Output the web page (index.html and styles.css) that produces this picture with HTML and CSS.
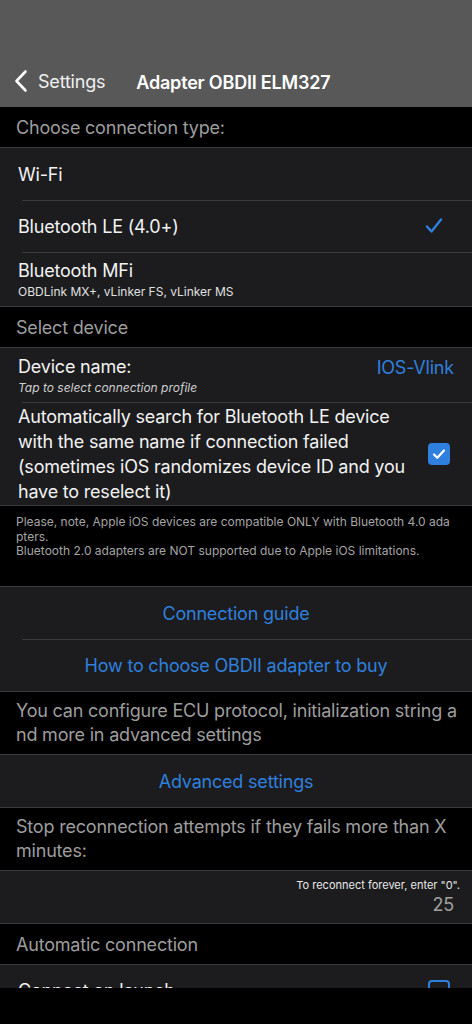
FILE: index.html
```html
<!DOCTYPE html>
<html>
    <head>
        <meta charset="UTF-8">
        <meta name="viewport" content="width=device-width, initial-scale=1.0">
        <link rel="stylesheet" href="styles.css">
        <title>Adapter OBDII ELM327</title>
    </head>
    <body>

        <div class="navbar">
            <div class="back">
                <svg class="chevron" width="14" height="24" viewBox="0 0 14 24">
                    <path d="M11.5 2.5 L2.5 12 L11.5 21.5" fill="none" stroke="#fff" stroke-width="2.6" stroke-linecap="round" stroke-linejoin="round"/>
                </svg>
                <span>Settings</span>
            </div>
            <div class="title">Adapter OBDII ELM327</div>
        </div>

        <div class="header">Choose connection type:</div>
        <div class="group">
            <div class="row"><span class="label">Wi-Fi</span></div>
            <div class="row">
                <span class="label">Bluetooth LE (4.0+)</span>
                <svg class="check" width="18" height="16" viewBox="0 0 18 16">
                    <path d="M2 8.5 L6.5 13.5 L16 1.5" fill="none" stroke="#2f80de" stroke-width="2.4" stroke-linecap="round" stroke-linejoin="round"/>
                </svg>
            </div>
            <div class="row two">
                <div class="texts">
                    <span class="label">Bluetooth MFi</span>
                    <span class="sub">OBDLink MX+, vLinker FS, vLinker MS</span>
                </div>
            </div>
        </div>

        <div class="header">Select device</div>
        <div class="group">
            <div class="row two">
                <div class="texts">
                    <span class="label">Device name:</span>
                    <span class="sub italic">Tap to select connection profile</span>
                </div>
                <span class="value">IOS-Vlink</span>
            </div>
            <div class="row tall">
                <span class="label long">Automatically search for Bluetooth LE device with the same name if connection failed (sometimes iOS randomizes device ID and you have to reselect it)</span>
                <div class="box on">
                    <svg width="14" height="12" viewBox="0 0 14 12">
                        <path d="M2 6.5 L5.3 9.8 L12 2.5" fill="none" stroke="#fff" stroke-width="2.2" stroke-linecap="round" stroke-linejoin="round"/>
                    </svg>
                </div>
            </div>
        </div>

        <div class="note">Please, note, Apple iOS devices are compatible ONLY with Bluetooth 4.0 ada<br>pters.<br>Bluetooth 2.0 adapters are NOT supported due to Apple iOS limitations.</div>

        <div class="group">
            <div class="row link">Connection guide</div>
            <div class="row link">How to choose OBDII adapter to buy</div>
        </div>

        <div class="header text">You can configure ECU protocol, initialization string a<br>nd more in advanced settings</div>

        <div class="group">
            <div class="row link">Advanced settings</div>
        </div>

        <div class="header text">Stop reconnection attempts if they fails more than X<br>minutes:</div>

        <div class="group">
            <div class="row input">
                <span class="hint">To reconnect forever, enter "0".</span>
                <span class="num">25</span>
            </div>
        </div>

        <div class="header">Automatic connection</div>
        <div class="group cut">
            <div class="row">
                <span class="label">Connect on launch</span>
                <div class="box"></div>
            </div>
        </div>

        <div class="bottom"></div>

    </body>
</html>
```

FILE: styles.css
```css
body {
    margin: 0;
    padding: 0;
    width: 472px;
    height: 1024px;
    overflow: hidden;
    background: #000;
    font-family: Inter, "Noto Sans", sans-serif;
    letter-spacing: -0.2px;
    color: #f2f2f2;
    display: flex;
    flex-direction: column;
}

.navbar {
    height: 107px;
    flex-shrink: 0;
    background: #585858;
    display: flex;
    align-items: flex-end;
    padding: 0 14px 14px;
    box-sizing: border-box;
    gap: 31px;
}

.back {
    display: flex;
    align-items: center;
    gap: 10px;
    font-size: 18px;
    color: #f0f0f0;
}

.title {
    font-size: 18px;
    font-weight: 600;
    color: #fff;
}

.header {
    height: 40px;
    flex-shrink: 0;
    box-sizing: border-box;
    padding: 0 16px;
    display: flex;
    align-items: center;
    font-size: 18px;
    color: #9d9d9d;
    background: #000;
}

.header.text {
    height: 62px;
    line-height: 24px;
    display: block;
    white-space: nowrap;
    padding-top: 7px;
}

.group {
    flex-shrink: 0;
    background: #1c1c1e;
    border-top: 1px solid #3b3b3e;
    border-bottom: 1px solid #3b3b3e;
}

.row {
    height: 52px;
    display: flex;
    align-items: center;
    justify-content: space-between;
    padding: 0 18px;
    box-sizing: border-box;
    position: relative;
}

/* inset separator between rows */
.row + .row::before {
    content: "";
    position: absolute;
    top: 0;
    left: 22px;
    right: 0;
    height: 1px;
    background: #3b3b3e;
}

.label {
    font-size: 18px;
}

.row.two {
    height: 54px;
}

.texts {
    display: flex;
    flex-direction: column;
    gap: 3px;
}

.sub {
    font-size: 12px;
    letter-spacing: 0;
    color: #e0e0e0;
}

.sub.italic {
    font-style: italic;
    color: #cfcfcf;
}

.value {
    font-size: 18px;
    color: #2f80de;
    align-self: flex-start;
    margin-top: 9px;
}

.check {
    margin-right: 11px;
}

.row.tall {
    height: 103px;
}

.label.long {
    line-height: 25px;
    width: 400px;
}

.box {
    width: 22px;
    height: 22px;
    border-radius: 4px;
    box-sizing: border-box;
    border: 2px solid #2f80de;
    display: flex;
    align-items: center;
    justify-content: center;
    margin-right: 4px;
    flex-shrink: 0;
}

.box.on {
    background: #2f80de;
}

.note {
    height: 80px;
    flex-shrink: 0;
    box-sizing: border-box;
    padding: 9px 16px 0;
    font-size: 12px;
    letter-spacing: 0;
    line-height: 14.5px;
    color: #a5a5a5;
}

.row.link {
    justify-content: center;
    font-size: 18px;
    color: #2f80de;
}

.row.input {
    flex-direction: column;
    align-items: flex-end;
    justify-content: flex-start;
    padding: 7px 12px 0 0;
}

.hint {
    font-size: 11px;
    letter-spacing: 0;
    color: #e8e8e8;
}

.num {
    font-size: 18px;
    color: #a0a0a0;
    margin-right: 6px;
    margin-top: 2px;
}

.group.cut {
    height: 23px;
    overflow: hidden;
    border-bottom: none;
}

.group.cut .row {
    align-items: flex-start;
    padding-top: 15px;
}

.bottom {
    flex: 1;
    background: #000;
}
```
